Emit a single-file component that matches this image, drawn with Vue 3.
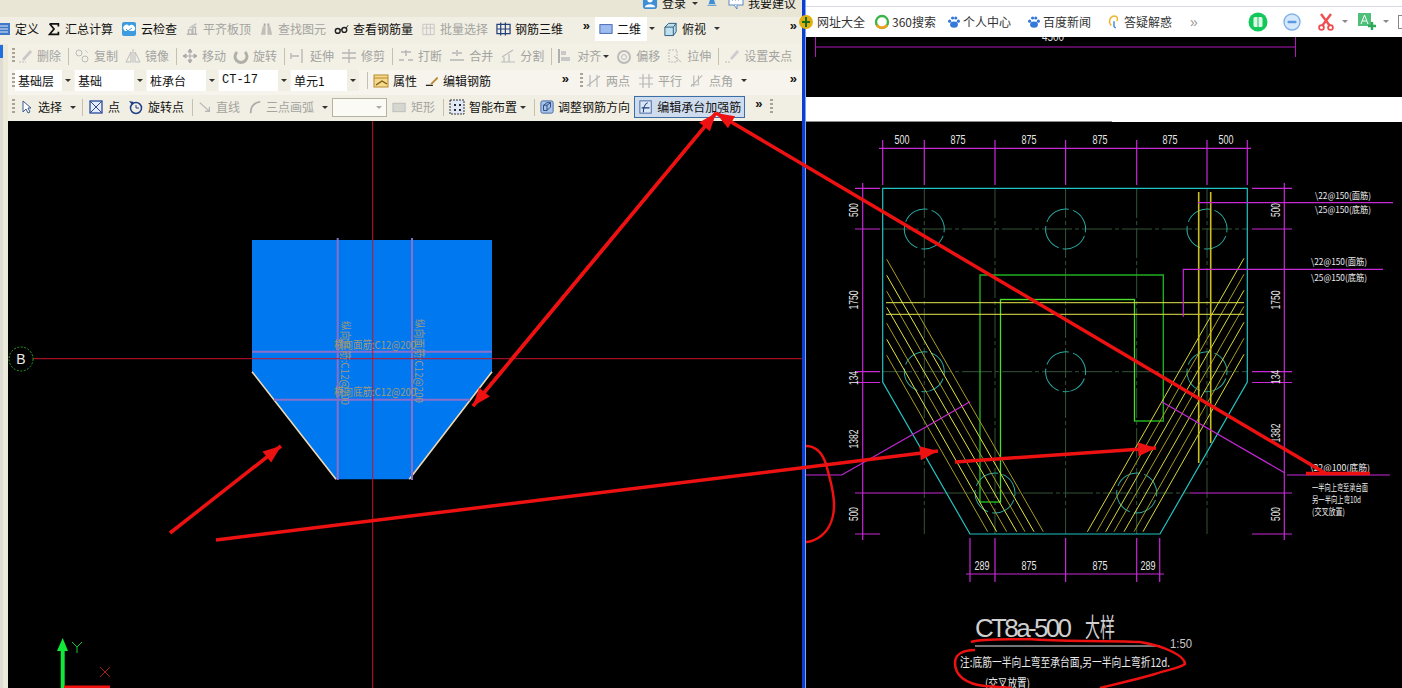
<script setup>
// 钢筋编辑界面 + CAD 大样图 截图还原

const icons = {
  list: '<rect x="1" y="2" width="14" height="12" fill="#3f78c8"/><path d="M3 5h10M3 8h10M3 11h10" stroke="#dfeaf8"/>',
  sigma: '<path d="M3 2h10v3M3 2l5 6-5 6h10v-3" fill="none" stroke="#111" stroke-width="2"/>',
  cloud: '<rect x="1" y="1" width="14" height="14" rx="2" fill="#3d9be0"/><path d="M3 9a3 3 0 0 1 5-4 3 3 0 0 1 5 5H4z" fill="#fff"/><path d="M5 8l2 2 4-3" fill="none" stroke="#3d9be0"/>',
  align: '<path d="M2 14h12M4 14V9h4v5M9 14V6h3v8" fill="none" stroke="#b5b5b5" stroke-width="1.5"/><path d="M5 7l8-5" stroke="#c5c5c5" stroke-width="2"/>',
  binoc: '<path d="M2 14l2-9h3v9zM9 14V5h3l2 9z" fill="#c0c0b8"/><path d="M5 2h2v3H5zM9 2h2v3H9z" fill="#aaa"/>',
  glasses: '<circle cx="4" cy="10" r="2.6" fill="none" stroke="#222" stroke-width="1.5"/><circle cx="11" cy="9" r="2.6" fill="none" stroke="#222" stroke-width="1.5"/><path d="M6 9l3-1M13 7l2-3" stroke="#222"/>',
  batch: '<path d="M2 3h12v11H2zM2 7h12M6 3v11M10 3v11" fill="none" stroke="#c5c5c5"/>',
  bar3d: '<path d="M1 3h14v10H1zM1 8h14M5 1v14M10 1v14" fill="none" stroke="#23407a" stroke-width="1.3"/>',
  view2d: '<rect x="1" y="3" width="14" height="10" fill="#9dbcf0" stroke="#3b5da8"/>',
  view3d: '<path d="M2 6l4-4h8v9l-3 4H2z" fill="#bfe0ee" stroke="#2b5a7a"/><path d="M2 6h9v9M11 6l3-4" fill="none" stroke="#2b5a7a"/>',
  erase: '<path d="M2 14h7" stroke="#bbb" stroke-dasharray="2 1"/><path d="M5 11l8-9 2 2-8 9z" fill="#c8c8c8"/>',
  copy: '<circle cx="5" cy="5" r="3" fill="none" stroke="#bbb"/><circle cx="11" cy="11" r="3" fill="none" stroke="#bbb"/><path d="M11 2l3 3" stroke="#ccc"/>',
  mirror: '<path d="M8 1v14" stroke="#bbb"/><path d="M6 4v10H1zM10 4v10h5z" fill="none" stroke="#bbb"/>',
  move: '<path d="M8 1v14M1 8h14M8 1l-2 3h4zM8 15l-2-3h4zM1 8l3-2v4zM15 8l-3-2v4z" fill="#aaa" stroke="#aaa"/>',
  rotate: '<path d="M4 4a6 6 0 1 0 8 0" fill="none" stroke="#b0b0a8" stroke-width="3"/>',
  extend: '<path d="M1 8h8M1 5v6M12 1v14" fill="none" stroke="#b5b5b5" stroke-width="1.3"/>',
  trim: '<path d="M1 5h14M1 10h14M8 1v14" fill="none" stroke="#b5b5b5" stroke-width="1.3"/>',
  breakk: '<path d="M1 12h5M10 12h5M3 4h10M8 2v6" fill="none" stroke="#b5b5b5" stroke-width="1.5"/>',
  merge: '<path d="M1 12h14M3 5h4M9 5h4M8 2v6" fill="none" stroke="#b5b5b5" stroke-width="1.5"/>',
  split: '<path d="M1 14h14M2 9l11-7M4 14V9M9 14V6" fill="none" stroke="#bbb" stroke-width="1.2"/>',
  alignl: '<path d="M2 1v14" stroke="#999" stroke-width="1.5"/><path d="M4 3h5v4H4zM4 9h9v4H4z" fill="#c8c8c8"/>',
  offset: '<circle cx="8" cy="9" r="6" fill="none" stroke="#bbb" stroke-width="2"/><circle cx="8" cy="9" r="2.5" fill="none" stroke="#bbb"/>',
  stretch: '<path d="M2 2h8v12H2z" fill="none" stroke="#bbb" stroke-dasharray="2 1"/><path d="M7 8l7 6" stroke="#bbb"/>',
  grip: '<path d="M1 14h5" stroke="#bbb" stroke-dasharray="2 1"/><path d="M6 10l7-8 2 2-7 8z" fill="#ccc"/>',
  attr: '<rect x="1" y="2" width="14" height="12" fill="#f5d98c" stroke="#b88a2c"/><path d="M1 5h14" stroke="#b88a2c"/><path d="M3 12l6-4 5 3" fill="none" stroke="#7a5a10" stroke-width="1.4"/>',
  editbar: '<path d="M1 13h8" stroke="#222" stroke-width="1.5"/><path d="M6 11l8-8 1 2-7 7z" fill="#b8862c"/>',
  twop: '<path d="M1 13l13-10M4 2v12M11 2v12" fill="none" stroke="#b8b8b8" stroke-width="1.2"/>',
  par: '<path d="M1 5h14M1 11h14M5 1v14M11 1v14" fill="none" stroke="#b8b8b8" stroke-width="1.2"/>',
  ang: '<path d="M1 14l12-12M4 2v12M9 2v9M1 12h9" fill="none" stroke="#b8b8b8" stroke-width="1.2"/>',
  cursor: '<path d="M5 2v11l3-3 2 4 2-1-2-4h3z" fill="#fff" stroke="#3a5a90"/>',
  point: '<rect x="2" y="2" width="12" height="12" fill="#e6ecfa" stroke="#2b4a9a" stroke-width="1.3"/><path d="M2 2l12 12M14 2L2 14" stroke="#2b4a9a"/>',
  rotp: '<circle cx="8" cy="9" r="5.5" fill="none" stroke="#1f3f8a" stroke-width="1.5"/><path d="M8 6v3h3" fill="none" stroke="#1f3f8a"/><path d="M1 2l5 1-2 3z" fill="#1f3f8a"/>',
  line: '<path d="M2 3l11 10M13 8v5H8" fill="none" stroke="#b5b5b5" stroke-width="1.4"/>',
  arc: '<path d="M3 15C3 8 7 3 14 2" fill="none" stroke="#aaa" stroke-width="2"/>',
  rect: '<rect x="1" y="4" width="13" height="9" fill="#d6d6d0" stroke="#bbb"/>',
  smart: '<rect x="1" y="1" width="14" height="14" fill="#dfe8f4" stroke="#333" stroke-dasharray="2 1"/><path d="M5 5h2v2H5zM10 5h2v2h-2zM5 10h2v2H5zM10 10h2v2h-2z" fill="#2a2a2a"/>',
  dir: '<rect x="1" y="1" width="14" height="14" rx="2" fill="#a8c4ea" stroke="#3a5f98"/><path d="M4 12V6l4-3h4v5l-4 4zM4 6h4v6M8 6l4-3" fill="none" stroke="#1f3f78"/>',
  addbar: '<rect x="1" y="1" width="13" height="14" fill="#dbe7f6" stroke="#3a5f98"/><path d="M10 3C6 5 5 9 5 14M3 9h9" fill="none" stroke="#1f3f78" stroke-width="1.2"/>',
  user: '<rect x="1" y="1" width="15" height="15" rx="3" fill="#3f8fd6"/><circle cx="8.5" cy="6" r="3" fill="#fff"/><path d="M3 14c1-4 10-4 11 0z" fill="#fff"/>',
  bell: '<path d="M3 11c2-1 1-8 5-8s3 7 5 8z" fill="#3f8fd6"/><path d="M2 12h12v1H2z" fill="#3f8fd6"/>',
  chat: '<rect x="1" y="1" width="14" height="10" fill="#fff" stroke="#5a8ac8"/><path d="M9 11v4l-3-4" fill="#fff" stroke="#5a8ac8"/><path d="M4 6h1M7 6h1M10 6h1" stroke="#5a8ac8"/>'
}

const t = (text, i, w, extra = {}) => ({ text, i, w, ...extra })
const sep = { sep: true }
const grip = { grip: true }
const more = { more: true }
const arrow = { arrow: true }
const arrowFar = { arrow: true, far: true }
const g = (text, i, w) => t(text, i, w, { grey: true })

const row1 = [
  { w: 600, start: true, items: [
    t('定义', 'list', 16), t('汇总计算', 'sigma', 14), t('云检查', 'cloud', 16), g('平齐板顶', 'align', 14),
    g('查找图元', 'binoc', 15), t('查看钢筋量', 'glasses', 15), g('批量选择', 'batch', 15), t('钢筋三维', 'bar3d', 15), more
  ] },
  { w: 207, items: [
    t('二维', 'view2d', 14, { light: true }), arrowFar, t('俯视', 'view3d', 15), arrowFar, more
  ] }
]

const row2 = [
  { w: 794, items: [
    grip, g('删除', 'erase', 16), sep, g('复制', 'copy', 16), g('镜像', 'mirror', 16), sep, g('移动', 'move', 16), g('旋转', 'rotate', 16), sep,
    g('延伸', 'extend', 16), g('修剪', 'trim', 16), sep, g('打断', 'breakk', 16), g('合并', 'merge', 16), g('分割', 'split', 16), sep,
    g('对齐', 'alignl', 16), arrow, g('偏移', 'offset', 16), g('拉伸', 'stretch', 16), sep, g('设置夹点', 'grip', 16)
  ] }
]

const combos = [
  { text: '基础层', w: 47 }, { text: '基础', w: 59 }, { text: '桩承台', w: 59 }, { text: 'CT-17', w: 59, mono: true }, { text: '单元1', w: 56 }
]

const row3 = [
  { w: 568, items: [
    grip, { combos: true }, sep, t('属性', 'attr', 16), t('编辑钢筋', 'editbar', 14), more
  ] },
  { w: 226, items: [
    grip, g('两点', 'twop', 16), g('平行', 'par', 16), g('点角', 'ang', 15), arrowFar, more
  ] }
]

const row4 = [
  { w: 794, items: [
    grip, t('选择', 'cursor', 16), arrowFar, sep, t('点', 'point', 16), t('旋转点', 'rotp', 16), sep,
    g('直线', 'line', 14), g('三点画弧', 'arc', 14), arrowFar, { select: true },
    g('矩形', 'rect', 15), sep, t('智能布置', 'smart', 16), arrow, sep, t('调整钢筋方向', 'dir', 14),
    t('编辑承台加强筋', 'addbar', 14, { active: true }), { more: true, near: true }, grip
  ] }
]

const toolRows = [
  { cls: 'r2', groups: row2 },
  { cls: 'r3', groups: row3 },
  { cls: 'r4', groups: row4 }
]

// ---- 右侧 CAD 图 ----
const xTicks = [882.7, 924.3, 995, 1065.6, 1136.7, 1207, 1247.3]
const topLabels = [
  { x: 902, t: '500' }, { x: 958, t: '875' }, { x: 1029, t: '875' }, { x: 1100, t: '875' }, { x: 1170, t: '875' }, { x: 1226, t: '500' }
]
const botTicks = [970, 995, 1065.6, 1136.7, 1159.7]
const botLabels = [
  { x: 982, t: '289' }, { x: 1029, t: '875' }, { x: 1100, t: '875' }, { x: 1148, t: '289' }
]
const sideTicks = [188.3, 229, 371.7, 382.5, 493, 534]
const leftLabels = [
  { y: 210, t: '500' }, { y: 300, t: '1750' }, { y: 378, t: '134' }, { y: 439, t: '1382' }, { y: 514, t: '500' }
]
const rightLabels = [
  { y: 210, t: '500' }, { y: 300, t: '1750' }, { y: 377, t: '134' }, { y: 433, t: '1382' }, { y: 514, t: '500' }
]
const piles = [
  [924.3, 229], [1065.6, 229], [1207, 229], [924.3, 371.7], [1065.6, 371.7], [1207, 371.7], [995, 493], [1136.7, 493]
]
const hatchEnds = [1043.3, 1034, 1025, 1016.7, 1006.7, 996.7, 987.7]
const hatch = hatchEnds.flatMap((ex, i) => {
  const y = 259.3 + i * 16
  const color = i % 2 ? '#e6e640' : '#a89e22'
  return [
    { x1: 886.7, y1: y, x2: ex, y2: 531.7, color },
    { x1: 1244, y1: y - 1, x2: 2130.7 - ex, y2: 531.7, color: i % 2 ? '#a89e22' : '#d8d83a' }
  ]
})
const notes = [
  { x: 1315, y: 195, w: 56, t: '\\22@150(面筋)' },
  { x: 1315, y: 209, w: 56, t: '\\25@150(底筋)' },
  { x: 1311, y: 261, w: 56, t: '\\22@150(面筋)' },
  { x: 1311, y: 277, w: 56, t: '\\25@150(底筋)' },
  { x: 1310, y: 467, w: 60, t: '\\22@100(底筋)' },
  { x: 1312, y: 487, w: 56, t: '一半向上弯至承台面' },
  { x: 1312, y: 499, w: 49, t: '另一半向上弯10d' },
  { x: 1312, y: 511, w: 33, t: '(交叉放置)' }
]

// ---- 红色标注 ----
const redArrows = [
  [170, 533, 281, 446],
  [216, 540, 938, 451],
  [955, 462, 1156, 448],
  [716, 113, 473, 406],
  [473, 406, 716, 113],
  [1325, 473, 716, 113]
]
const head = ([x1, y1, x2, y2]) => {
  const len = Math.hypot(x2 - x1, y2 - y1)
  const ux = (x2 - x1) / len
  const uy = (y2 - y1) / len
  const bx = x2 - ux * 18
  const by = y2 - uy * 18
  return `${x2},${y2} ${bx - uy * 7},${by + ux * 7} ${bx + uy * 7},${by - ux * 7}`
}
const heads = redArrows.map(head)

const webLinks = [
  { text: '网址大全', kind: 'ball' },
  { text: '360搜索', kind: 'ring' },
  { text: '个人中心', kind: 'paw' },
  { text: '百度新闻', kind: 'paw' },
  { text: '答疑解惑', kind: 'hook' }
]
</script>

<template>
  <div class="page">
    <section class="left">
      <div class="login-bar">
        <svg class="ico top-ico" viewBox="0 0 17 17" v-html="icons.user"></svg>
        <span class="txt">登录</span>
        <i class="tri"></i>
        <svg class="ico bell" viewBox="0 0 16 16" v-html="icons.bell"></svg>
        <svg class="ico chat" viewBox="0 0 16 16" v-html="icons.chat"></svg>
        <span class="txt">我要建议</span>
      </div>

      <div class="row r1">
        <div v-for="(grp, gi) in row1" :key="gi" class="tb" :class="{ start: grp.start }" :style="{ width: grp.w + 'px' }">
          <template v-for="(it, k) in grp.items" :key="k">
            <i v-if="it.arrow" class="tri" :class="{ far: it.far }"></i>
            <span v-else-if="it.more" class="more">»</span>
            <span v-else class="item" :class="{ grey: it.grey, light: it.light }">
              <svg class="ico" :style="{ width: it.w + 'px' }" viewBox="0 0 16 16" v-html="icons[it.i]"></svg>
              <span class="txt">{{ it.text }}</span>
            </span>
          </template>
        </div>
      </div>

      <div class="body">
        <div class="strip"><div class="strip-tab"></div></div>
        <div class="main">
          <div v-for="r in toolRows" :key="r.cls" class="row" :class="r.cls">
            <div v-for="(grp, gi) in r.groups" :key="gi" class="tb" :style="{ width: grp.w + 'px' }">
              <template v-for="(it, k) in grp.items" :key="k">
                <i v-if="it.grip" class="grip"></i>
                <i v-else-if="it.sep" class="sep"></i>
                <i v-else-if="it.arrow" class="tri" :class="{ far: it.far }"></i>
                <span v-else-if="it.more" class="more" :class="{ near: it.near }">»</span>
                <span v-else-if="it.select" class="select"><i class="tri"></i></span>
                <span v-else-if="it.combos" class="combos">
                  <span v-for="c in combos" :key="c.text" class="combo">
                    <span class="field" :class="{ mono: c.mono }" :style="{ width: c.w + 'px' }">{{ c.text }}</span>
                    <span class="drop"><i class="tri"></i></span>
                  </span>
                </span>
                <span v-else class="item" :class="{ grey: it.grey, active: it.active }">
                  <svg class="ico" :style="{ width: it.w + 'px' }" viewBox="0 0 16 16" v-html="icons[it.i]"></svg>
                  <span class="txt">{{ it.text }}</span>
                </span>
              </template>
            </div>
          </div>

          <svg class="canvas" viewBox="8 121 794 567">
            <polygon points="252,240 492,240 492,371.7 409.3,479.3 336,479.3 252,371.7" fill="#0078f0" />
            <path d="M252 371.7L336 479.3M492 371.7L409.3 479.3" stroke="#efd9b4" stroke-width="1.6" />
            <path d="M337.7 238V480M412 238V480M252 351.7H492M274 399.7H470" stroke="#8a6fca" stroke-width="2" />
            <path d="M372.7 121V688M33 358.7H802" stroke="#c3142a" />
            <g class="rebar-label">
              <text x="334" y="349" textLength="82" lengthAdjust="spacingAndGlyphs">横向面筋:C12@200</text>
              <text x="334" y="396" textLength="82" lengthAdjust="spacingAndGlyphs">横向底筋:C12@200</text>
              <text transform="translate(341 321) rotate(90)" textLength="84" lengthAdjust="spacingAndGlyphs">纵向底筋:C12@200</text>
              <text transform="translate(415 319) rotate(90)" textLength="84" lengthAdjust="spacingAndGlyphs">纵向面筋:C12@200</text>
            </g>
            <circle cx="21" cy="359" r="12" fill="none" stroke="#2aa02a" stroke-dasharray="2 1.5" />
            <text x="21" y="364" class="axis-b">B</text>
            <path d="M62.7 688V650" stroke="#12e83a" stroke-width="4" />
            <polygon points="62.7,638 57,651 68,651" fill="#12e83a" />
            <path d="M72 642l5 5 5-5M77 647v6" fill="none" stroke="#12c83a" />
            <path d="M64 687H110" stroke="#f01010" stroke-width="3" />
            <path d="M100 667l10 10M110 667l-10 10" stroke="#a02020" />
          </svg>
        </div>
      </div>
    </section>

    <div class="divider"></div>

    <section class="right">
      <div class="web-bar">
        <span v-for="l in webLinks" :key="l.text" class="web-link" :class="'k-' + l.kind">
          <svg class="web-ico" viewBox="0 0 16 16">
            <template v-if="l.kind === 'ball'"><circle cx="7" cy="8" r="7" fill="#e0b010" /><path d="M7 3v10M3 8h8" stroke="#186a18" stroke-width="2" /></template>
            <template v-else-if="l.kind === 'ring'"><circle cx="8" cy="8" r="6" fill="none" stroke="#3cb44a" stroke-width="2.4" /><path d="M3 11a6 6 0 0 0 10 0" fill="none" stroke="#f0a020" stroke-width="2.4" /></template>
            <template v-else-if="l.kind === 'paw'"><ellipse cx="8" cy="11" rx="4.5" ry="3.5" fill="#3478d8" /><circle cx="3" cy="7" r="1.8" fill="#3478d8" /><circle cx="6.4" cy="3.4" r="1.8" fill="#3478d8" /><circle cx="10" cy="3.4" r="1.8" fill="#3478d8" /><circle cx="13" cy="7" r="1.8" fill="#3478d8" /></template>
            <template v-else><path d="M5 12C1 8 3 2 8 1c4 0 5 4 3 6" fill="none" stroke="#f0b020" stroke-width="1.5" /><path d="M8 7v6l2 2" fill="none" stroke="#2a80d0" stroke-width="1.5" /></template>
          </svg>
          <span>{{ l.text }}</span>
        </span>
        <span class="web-more">»</span>
        <i class="web-sep"></i>
        <svg class="btn-green" viewBox="0 0 20 20"><circle cx="10" cy="10" r="9.5" fill="#12c85a" /><rect x="5.5" y="5" width="9" height="10" rx="1.5" fill="#dff7e6" /><path d="M10 5v10" stroke="#12c85a" /></svg>
        <svg class="btn-blue" viewBox="0 0 18 18"><circle cx="9" cy="9" r="8" fill="#d6e8fb" stroke="#7fb2ea" stroke-width="1.4" /><rect x="4.5" y="7.8" width="9" height="2.4" rx="1" fill="#5b9ae0" /></svg>
        <svg class="btn-cut" viewBox="0 0 16 18"><path d="M3 1l9 12M13 1L4 13" stroke="#f04f4f" stroke-width="2.4" /><circle cx="3.5" cy="14.5" r="2.4" fill="none" stroke="#f04f4f" stroke-width="1.8" /><circle cx="12.5" cy="14.5" r="2.4" fill="none" stroke="#f04f4f" stroke-width="1.8" /></svg>
        <i class="tri gray"></i>
        <svg class="btn-font" viewBox="0 0 18 18"><rect x="0" y="0" width="13" height="13" fill="#4fc07a" /><path d="M3 11l3.5-9L10 11M4.5 8h4" fill="none" stroke="#fff" /><path d="M14 9v8M10 13h8" stroke="#2fa85a" stroke-width="2.4" /></svg>
        <i class="tri gray"></i>
        <i class="btn-box"></i>
      </div>

      <svg class="band" viewBox="806 37 596 60">
        <path d="M815 47H1296M815.5 37V57M1295.5 37V57" stroke="#b018b8" />
        <text x="1053" y="41" class="dim" text-anchor="middle" textLength="22" lengthAdjust="spacingAndGlyphs">4500</text>
      </svg>
      <div class="gap-white"><div class="gap-line"></div></div>

      <svg class="cad" viewBox="806 122 596 566">
        <!-- 轴线 -->
        <g stroke="#33553a" stroke-dasharray="30 3 4 3" fill="none">
          <path v-for="x in [924.3, 995, 1065.6, 1136.7, 1207]" :key="x" :d="`M${x} 188V534`" />
          <path d="M882 229H1247M882 371.7H1247M943 493H1190" />
        </g>
        <!-- 承台外轮廓 -->
        <polygon points="882.7,188.3 1247.3,188.3 1247.3,382 1160,534 970,534 882.7,382" fill="none" stroke="#21c4c4" stroke-width="1.2" />
        <g fill="none" stroke="#2aa8a0" stroke-dasharray="27 4.4">
          <circle v-for="p in piles" :key="p.join()" :cx="p[0]" :cy="p[1]" r="20" :transform="`rotate(20 ${p[0]} ${p[1]})`" />
        </g>
        <!-- 钢筋 -->
        <path d="M980 502V275H1163.3V421H1134.5V299.5H1000.5V502Z" fill="none" stroke="#1fae1f" stroke-width="1.4" />
        <path d="M1000.5 502V299.5H1134.5V421" fill="none" stroke="#4fdc28" />
        <line v-for="(h, k) in hatch" :key="k" :x1="h.x1" :y1="h.y1" :x2="h.x2" :y2="h.y2" :stroke="h.color" />
        <path d="M886 302.7H1244M886 314.3H1244" stroke="#e8e84a" />
        <path d="M1198.7 192V463" stroke="#c9c020" stroke-width="1.6" />
        <path d="M1210.7 192V443" stroke="#c9c020" stroke-width="1.6" />
        <!-- 标注线 -->
        <g stroke="#c828d8" stroke-width="1.2" fill="none">
          <path v-for="x in xTicks" :key="x" :d="`M${x} 140V185`" />
          <path d="M879 148.3H1251M862.7 183V540M1284.3 183V540" />
          <path v-for="y in sideTicks" :key="y" :d="`M855 ${y}H880M1252 ${y}H1292`" />
          <path d="M880 493H943M1190 493H1252" />
          <path d="M966 574H1164" />
          <path v-for="x in botTicks" :key="x" :d="`M${x} 538V582`" />
          <path d="M806 475H841.7L970 401.7" />
          <path d="M1161.7 401.7L1285 473" />
          <path d="M1287 475H1390M1198 202.7H1393M1183.3 316.7V269.3H1383" />
        </g>
        <g class="dim-set">
          <text v-for="l in topLabels" :key="l.x" :x="l.x" y="144" class="dim" text-anchor="middle" textLength="15" lengthAdjust="spacingAndGlyphs">{{ l.t }}</text>
          <text v-for="l in botLabels" :key="l.x" :x="l.x" y="570" class="dim" text-anchor="middle" textLength="15" lengthAdjust="spacingAndGlyphs">{{ l.t }}</text>
          <text v-for="l in leftLabels" :key="l.y" :transform="`translate(858 ${l.y}) rotate(-90)`" class="dim" text-anchor="middle" :textLength="l.t.length > 3 ? 19 : 14" lengthAdjust="spacingAndGlyphs">{{ l.t }}</text>
          <text v-for="l in rightLabels" :key="l.y" :transform="`translate(1280 ${l.y}) rotate(-90)`" class="dim" text-anchor="middle" :textLength="l.t.length > 3 ? 19 : 14" lengthAdjust="spacingAndGlyphs">{{ l.t }}</text>
        </g>
        <text v-for="n in notes" :key="n.y" :x="n.x" :y="n.y + 4" class="note" :textLength="n.w" lengthAdjust="spacingAndGlyphs">{{ n.t }}</text>
        <!-- 标题 -->
        <text x="975" y="637" class="title" textLength="97" lengthAdjust="spacing">CT8a-500</text>
        <text x="1085" y="637" class="title" textLength="30" lengthAdjust="spacingAndGlyphs">大样</text>
        <path d="M975 646H1160" stroke="#e8e8e8" />
        <text x="1170" y="648" class="dim big" textLength="22" lengthAdjust="spacingAndGlyphs">1:50</text>
        <text x="960" y="667" class="note wide" textLength="210" lengthAdjust="spacingAndGlyphs">注:底筋一半向上弯至承台面,另一半向上弯折12d.</text>
        <text x="985" y="688" class="note wide" textLength="45" lengthAdjust="spacingAndGlyphs">(交叉放置)</text>
      </svg>
    </section>

    <!-- 手工红色批注，盖在两个窗口上 -->
    <svg class="marks" viewBox="0 0 1402 688">
      <line v-for="(a, k) in redArrows" :key="k" :x1="a[0]" :y1="a[1]" :x2="a[2]" :y2="a[3]" stroke="#ee1111" stroke-width="3.5" />
      <polygon v-for="(p, k) in heads" :key="k" :points="p" fill="#ee1111" />
      <path d="M1306 473.5H1370" stroke="#ee1111" stroke-width="3.5" />
      <g fill="none" stroke="#ee1111" stroke-width="2.5">
        <path d="M806 446C816 446 822 452 826 464C830 480 834 490 834 505C834 520 828 532 818 538C813 541 810 542 806 542" />
        <path d="M971 642C985 638 1010 640 1030 639C1060 642 1100 640 1140 642C1165 646 1185 656 1185 664C1180 668 1170 669 1155 674C1135 680 1115 684 1100 688" />
        <path d="M975 650C962 650 955 655 955 663C955 675 965 684 985 686L1012 688" />
      </g>
    </svg>
  </div>
</template>

<style scoped>
.page {
  position: relative;
  display: flex;
  width: 1402px;
  height: 688px;
  overflow: hidden;
  font-family: "Noto Sans CJK SC", "Liberation Sans", sans-serif;
  font-size: 12px;
  color: #111;
  background: #000;
}
.left {
  display: flex;
  flex-direction: column;
  width: 802px;
  flex: none;
  background: #ece9d8;
}
.login-bar {
  display: flex;
  justify-content: flex-end;
  align-items: flex-start;
  gap: 4px;
  height: 17px;
  padding-right: 6px;
  overflow: hidden;
  background: #e9e6d6;
  line-height: 12px;
}
.login-bar .ico { margin-top: -6px; height: 16px; width: 16px; }
.login-bar .txt { margin-top: -3px; }
.login-bar .tri { margin: 2px 4px 0 2px; }
.login-bar .bell { width: 12px; margin-right: 6px; }
.row {
  display: flex;
  flex: none;
}
.r1 { height: 27px; background: #f1efe3; }
.r2 { height: 26px; background: #f3f1e6; }
.r3 { height: 25px; background: #f6f4ec; }
.r4 { height: 26px; background: #f1efe3; }
.tb {
  display: flex;
  align-items: center;
  gap: 8px;
  flex: none;
  padding-left: 4px;
  padding-bottom: 2px;
  box-sizing: border-box;
}
.r1 .tb, .r3 .tb { padding-bottom: 4px; }
.r2 .tb { gap: 7px; }
.r2 .sep { margin-right: -2px; }
.tb.start {
  margin-left: -5px;
  padding-left: 0;
}
.item {
  display: flex;
  align-items: center;
  gap: 4px;
  white-space: nowrap;
  line-height: 16px;
}
.item.grey { color: #a3a3a0; }
.item.light {
  background: #fff;
  margin: 0 -6px 0 -4px;
  padding: 4px 6px 4px 4px;
}
.item.active {
  margin-left: -4px;
  padding: 2px 3px 2px 4px;
  background: #cfdcee;
  border: 1px solid #3a6ea5;
}
.ico {
  flex: none;
  width: 16px;
  height: 16px;
}
.grip {
  flex: none;
  width: 3px;
  height: 16px;
  margin-right: -5px;
  background: repeating-linear-gradient(to bottom, #a8a594 0 2px, transparent 2px 4px);
}
.sep {
  flex: none;
  width: 1px;
  height: 17px;
  margin-right: -3px;
  background: #c4c1ae;
}
.tri.far + .sep { margin-left: -2px; }
.tri {
  flex: none;
  display: block;
  width: 0;
  height: 0;
  margin-left: -5px;
  border-left: 3px solid transparent;
  border-right: 3px solid transparent;
  border-top: 3px solid #333;
}
.tri.far { margin-left: 0; }
.tri.gray { margin: 0; border-top-color: #888; }
.more {
  margin-left: auto;
  padding-right: 5px;
  font-family: "Liberation Sans", sans-serif;
  font-size: 13px;
  font-weight: bold;
  line-height: 12px;
  align-self: flex-start;
  margin-top: 3px;
}
.r3 .tb:first-child .more { padding-right: 7px; }
.more.near {
  margin-left: 2px;
  padding-right: 0;
}
.combos {
  display: flex;
  gap: 1px;
  margin-left: -3px;
}
.combo { display: flex; }
.field {
  height: 21px;
  padding-left: 3px;
  box-sizing: border-box;
  background: #fff;
  line-height: 21px;
}
.field.mono { font-family: "Liberation Mono", monospace; }
.drop {
  display: flex;
  align-items: center;
  justify-content: center;
  width: 12px;
  background: #f1efe3;
}
.drop .tri { margin-left: 0; }
.select {
  display: flex;
  align-items: center;
  justify-content: flex-end;
  width: 55px;
  height: 19px;
  margin: 0 -3px 0 -4px;
  padding-right: 4px;
  box-sizing: border-box;
  background: #fbfaf5;
  border: 1px solid #b5b3a3;
}
.select .tri { border-top-color: #aaa; }
.body {
  display: flex;
  flex: 1;
  min-height: 0;
}
.strip {
  flex: none;
  width: 8px;
  background: linear-gradient(to right, #dcdcd4 0 3px, #ece9d8 3px);
}
.strip-tab {
  width: 3px;
  height: 13px;
  margin-top: 1px;
  background: #1f6fe0;
}
.main {
  display: flex;
  flex-direction: column;
  width: 794px;
  flex: none;
}
.canvas {
  display: block;
  width: 794px;
  height: 567px;
  background: #000;
}
.rebar-label text {
  font-size: 11px;
  fill: #a09878;
}
.axis-b {
  font: 14px "Liberation Sans", sans-serif;
  fill: #e8e8e8;
  text-anchor: middle;
}
.divider {
  flex: none;
  width: 4px;
  background: linear-gradient(to right, #0a3fd0 0 3px, #7fa0f0 3px);
}
.right {
  display: flex;
  flex-direction: column;
  flex: 1;
  min-width: 0;
}
.web-bar {
  display: flex;
  align-items: center;
  flex: none;
  height: 37px;
  padding-top: 6px;
  box-sizing: border-box;
  background: linear-gradient(to bottom, #fff 6px, #d8dae2 6px 7px, #fff 7px);
  color: #333;
}
.web-link {
  display: flex;
  align-items: center;
  gap: 2px;
  margin-right: 10px;
  white-space: nowrap;
}
.k-ball { margin-left: -7px; margin-right: 9px; }
.k-paw { margin-right: 16px; }
.k-ring { margin-right: 11px; }
.web-ico { width: 16px; height: 16px; flex: none; }
.k-paw .web-ico { width: 14px; height: 14px; }
.k-hook .web-ico { width: 14px; height: 16px; margin-right: 1px; }
.web-more {
  margin-left: 8px;
  color: #999;
  font: 14px "Liberation Sans", sans-serif;
}
.web-sep {
  width: 1px;
  height: 16px;
  margin: 0 21px 0 29px;
  background: #e0e0e0;
}
.btn-green { width: 20px; height: 20px; margin-right: 15px; flex: none; }
.btn-blue { width: 18px; height: 18px; margin-right: 17px; flex: none; }
.btn-cut { width: 16px; height: 18px; margin-right: 8px; flex: none; }
.btn-font { width: 18px; height: 18px; margin: 0 7px 0 10px; flex: none; }
.btn-box {
  width: 8px;
  height: 14px;
  margin-left: 9px;
  box-sizing: border-box;
  border: 1px solid #888;
  flex: none;
}
.band {
  display: block;
  flex: none;
  width: 596px;
  height: 60px;
  background: #000;
}
.gap-white {
  flex: none;
  height: 25px;
  background: #fff;
  display: flex;
  align-items: flex-end;
}
.gap-line {
  width: 306px;
  height: 1px;
  background: #8a8a8a;
}
.cad {
  display: block;
  flex: 1;
  width: 596px;
  min-height: 0;
  background: #000;
}
.dim {
  font: 13px "Liberation Sans", sans-serif;
  fill: #e6e6e6;
}
.dim.big { font-size: 13px; fill: #c8c8c8; }
.note {
  font: 9px "Noto Sans CJK SC", sans-serif;
  fill: #ececec;
}
.note.wide { font-size: 12px; }
.title {
  font: 26px "Liberation Sans", "Noto Sans CJK SC", sans-serif;
  fill: #d0d0d0;
}
.marks {
  position: absolute;
  inset: 0;
  width: 1402px;
  height: 688px;
  pointer-events: none;
}
</style>

<style>
html, body {
  margin: 0;
  overflow: hidden;
  background: #000;
}
</style>
